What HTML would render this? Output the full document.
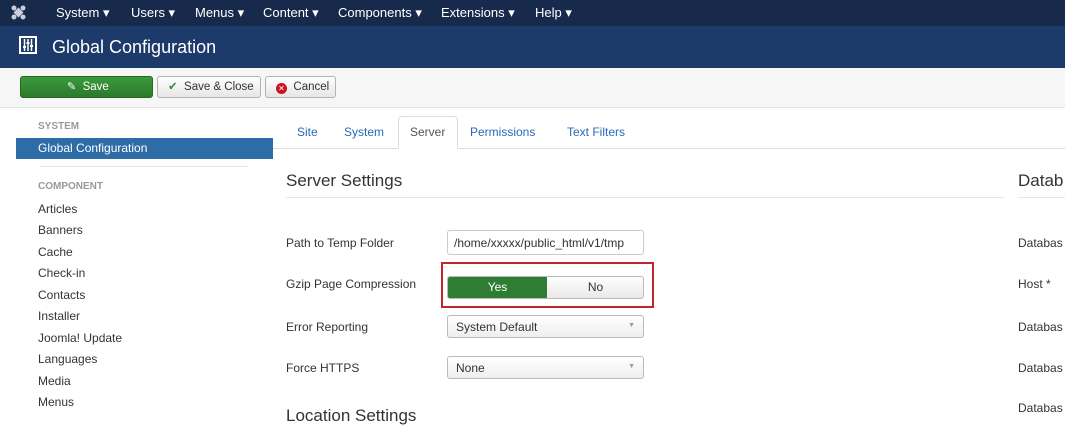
<!DOCTYPE html>
<html><head><style>
*{box-sizing:border-box;margin:0;padding:0}
body{width:1065px;height:412px;overflow:hidden;background:#fff;font-family:"Liberation Sans",sans-serif;font-size:12px;color:#333;position:relative}
.a{position:absolute;white-space:nowrap}
.nav{left:0;top:0;width:1065px;height:26px;background:#172a4c}
.nav span{position:absolute;top:5px;color:#fff;font-size:13px}
.hdr{left:0;top:26px;width:1065px;height:42px;background:#1c3a6a}
.tb{left:0;top:68px;width:1065px;height:40px;background:#f6f6f6;border-bottom:1px solid #e3e3e3}
.btn{position:absolute;top:76px;height:22px;border:1px solid #b3b3b3;border-radius:3px;background:linear-gradient(#fff,#e6e6e6);font-size:11.5px;line-height:20px}
.side{font-size:12px;color:#333;left:38px}
.cap{font-size:10px;color:#999;font-weight:bold;left:38px}
.tab{top:125px;font-size:12px;color:#2a69b8}
.lbl{left:286px;font-size:12px}
.r{left:1018px;font-size:12px}
.sel{position:absolute;left:447px;width:197px;height:23px;border:1px solid #bbb;border-radius:3px;background:linear-gradient(#fff,#eee);font-size:12px;padding:4px 8px}
.sel:after{content:"▼";position:absolute;right:8px;top:6px;font-size:7px;color:#999}
</style></head><body>
<div class="a nav">
<svg style="position:absolute;left:11px;top:5px" width="15" height="15" viewBox="0 0 15 15"><g fill="#ccd" ><circle cx="3" cy="3" r="2.5"/><circle cx="12" cy="3" r="2.5"/><circle cx="3" cy="12" r="2.5"/><circle cx="12" cy="12" r="2.5"/><rect x="4" y="4" width="7" height="7" transform="rotate(45 7.5 7.5)"/></g></svg>
<span style="left:56px">System ▾</span><span style="left:131px">Users ▾</span><span style="left:195px">Menus ▾</span><span style="left:263px">Content ▾</span><span style="left:338px">Components ▾</span><span style="left:441px">Extensions ▾</span><span style="left:535px">Help ▾</span>
</div>
<div class="a hdr">
<svg style="position:absolute;left:19px;top:10px" width="18" height="18" viewBox="0 0 18 18"><rect x="1" y="1" width="16" height="16" fill="none" stroke="#fff" stroke-width="2"/><g stroke="#fff" stroke-width="1.5"><line x1="5.5" y1="3" x2="5.5" y2="15"/><line x1="9" y1="3" x2="9" y2="15"/><line x1="12.5" y1="3" x2="12.5" y2="15"/></g><g fill="#fff"><rect x="4" y="10" width="3" height="2"/><rect x="7.5" y="6" width="3" height="2"/><rect x="11" y="9" width="3" height="2"/></g></svg>
<span style="position:absolute;left:52px;top:11px;color:#fff;font-size:18px">Global Configuration</span>
</div>
<div class="a tb"></div>
<div class="btn" style="left:20px;width:133px;background:linear-gradient(#3c9a3c,#2b7a2b);border-color:#236b23;color:#fff;padding-left:46px"><span style="font-size:11px">&#9998;</span>&nbsp; Save</div>
<div class="btn" style="left:157px;width:104px;padding-left:10px"><span style="color:#3a8a3a">✔</span>&nbsp; Save &amp; Close</div>
<div class="btn" style="left:265px;width:71px;padding-left:10px"><span style="display:inline-block;width:11px;height:11px;border-radius:50%;background:#c12;color:#fff;font-size:8px;line-height:11px;text-align:center;vertical-align:-1px">✕</span>&nbsp; Cancel</div>

<div class="a cap" style="top:121px">SYSTEM</div>
<div class="a" style="left:16px;top:138px;width:257px;height:21px;background:#2d6ca7;color:#fff;padding:3px 0 0 22px">Global Configuration</div>
<div class="a" style="left:40px;top:166px;width:208px;height:1px;background:#e5e5e5"></div>
<div class="a cap" style="top:181px">COMPONENT</div>
<div class="a side" style="top:202px">Articles</div>
<div class="a side" style="top:223px">Banners</div>
<div class="a side" style="top:245px">Cache</div>
<div class="a side" style="top:266px">Check-in</div>
<div class="a side" style="top:288px">Contacts</div>
<div class="a side" style="top:309px">Installer</div>
<div class="a side" style="top:331px">Joomla! Update</div>
<div class="a side" style="top:352px">Languages</div>
<div class="a side" style="top:374px">Media</div>
<div class="a side" style="top:395px">Menus</div>

<div class="a" style="left:273px;top:148px;width:792px;height:1px;background:#ddd"></div>
<div class="a" style="left:398px;top:116px;width:60px;height:33px;border:1px solid #ddd;border-bottom-color:#fff;border-radius:4px 4px 0 0;background:#fff"></div>
<div class="a tab" style="left:297px">Site</div>
<div class="a tab" style="left:344px">System</div>
<div class="a tab" style="left:410px;color:#555">Server</div>
<div class="a tab" style="left:470px">Permissions</div>
<div class="a tab" style="left:567px">Text Filters</div>

<div class="a" style="left:286px;top:171px;font-size:17px">Server Settings</div>
<div class="a" style="left:286px;top:197px;width:718px;height:1px;background:#e5e5e5"></div>
<div class="a" style="left:1018px;top:171px;font-size:17px">Datab</div>
<div class="a" style="left:1018px;top:197px;width:47px;height:1px;background:#e5e5e5"></div>

<div class="a lbl" style="top:236px">Path to Temp Folder</div>
<div class="a lbl" style="top:277px">Gzip Page Compression</div>
<div class="a lbl" style="top:320px">Error Reporting</div>
<div class="a lbl" style="top:361px">Force HTTPS</div>
<div class="a lbl" style="top:401px;font-size:17px;top:406px">Location Settings</div>

<div class="a" style="left:447px;top:230px;width:197px;height:25px;border:1px solid #ccc;border-radius:3px;padding:5px 6px;font-size:12px">/home/xxxxx/public_html/v1/tmp</div>
<div class="a" style="left:441px;top:262px;width:213px;height:46px;border:2px solid #c0262b"></div>
<div class="a" style="left:447px;top:276px;width:197px;height:23px;border:1px solid #bbb;border-radius:3px;overflow:hidden;background:linear-gradient(#fff,#e8e8e8)">
<div style="position:absolute;left:0;top:0;width:99px;height:23px;background:#2f7d32;color:#fff;text-align:center;line-height:21px">Yes</div>
<div style="position:absolute;left:99px;top:0;width:97px;text-align:center;line-height:21px">No</div></div>
<div class="sel" style="top:315px">System Default</div>
<div class="sel" style="top:356px">None</div>

<div class="a r" style="top:236px">Databas</div>
<div class="a r" style="top:277px">Host *</div>
<div class="a r" style="top:320px">Databas</div>
<div class="a r" style="top:361px">Databas</div>
<div class="a r" style="top:401px">Databas</div>
</body></html>
